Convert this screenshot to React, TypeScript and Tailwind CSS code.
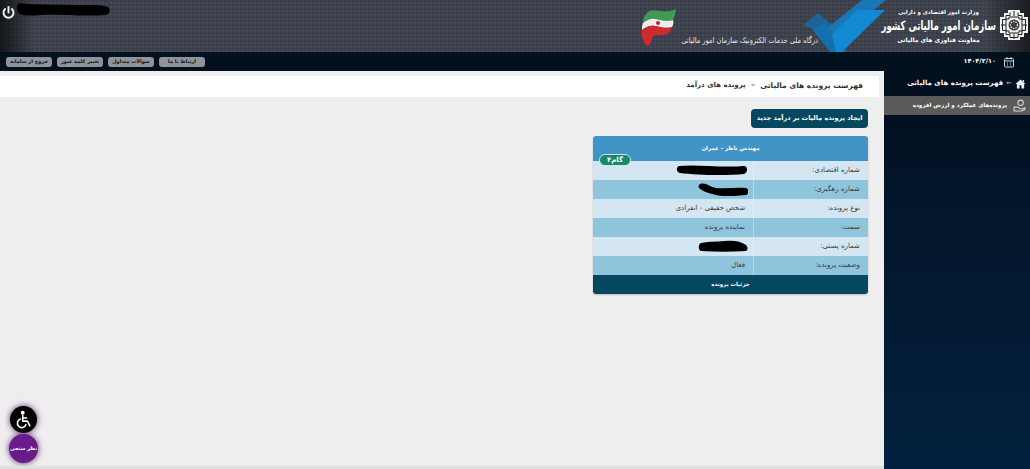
const rows = [
  { label: "شماره اقتصادی:", value: "", blob: "M3 2C20 0 45 4 68 2c4 0 4 7 0 8C50 12 20 11 4 9C0 8 0 3 3 2z", w: 72, h: 12 },
  { label: "شماره رهگیری:", value: "", blob: "M2 1c6-2 10 3 16 4c10 1 20-1 30 0c3 1 3 6 0 7c-10 1-20 2-30 0C10 10 4 8 1 5C0 3 1 2 2 1z", w: 50, h: 13 },
  { label: "نوع پرونده:", value: "شخص حقیقی - انفرادی", blob: "", w: 0, h: 0 },
  { label: "سمت:", value: "نماینده پرونده", blob: "", w: 0, h: 0 },
  { label: "شماره پستی:", value: "", blob: "M3 3c10-2 14-1 24-2c8-1 16 0 21 4c2 2 2 5 0 6c-15 1-30 1-45 0C0 10 0 4 3 3z", w: 50, h: 12 },
  { label: "وضعیت پرونده:", value: "فعال", blob: "", w: 0, h: 0 },
]

const navLinks = ["ارتباط با ما", "سوالات متداول", "تغییر کلمه عبور", "خروج از سامانه"]

const Logo = () => (
  <svg width="28" height="30" viewBox="0 0 28 30" className="shrink-0">
    <path d="M8 0h12v3h4v4h4v16h-4v4h-4v3H8v-3H4v-4H0V7h4V3h4z" fill="#f0f0f0" />
    <path d="M10 2.500v3H6v4H2.500v11H6v4h4v3h8v-3h4v-4h3.500v-11H22v-4h-4v-3M14 1v5M14 24v5M1 15h5M22 15h5" fill="none" stroke="#222" strokeWidth="1" />
    <path d="M9 7h10v2h3v12h-3v2H9v-2H6V9h3z" fill="none" stroke="#222" strokeWidth="1" />
    <circle cx="14" cy="15" r="5.500" fill="#3a3a3a" />
    <circle cx="14" cy="15" r="3.500" fill="none" stroke="#ddd" strokeWidth="1.300" strokeDasharray="1.500 1" />
  </svg>
)

const Flag = () => (
  <svg width="36" height="38" viewBox="0 0 36 38" className="shrink-0">
    <path d="M5 5C9 0 13 1 20 2C26 3 31 2 35 0C35 4 33 8 32 11C26 13 20 11 14 10C10 9 6 11 2 14C2 11 3 8 5 5z" fill="#3f9a55" />
    <path d="M2 14C6 11 10 9 14 10C20 11 26 13 32 11C33 14 32 16 31 18C25 20 20 18 14 17C9 16 5 18 1 21C1 19 1 16 2 14z" fill="#ececec" />
    <path d="M1 21C5 18 9 16 14 17C20 18 25 20 31 18C30 22 28 24 26 25C20 27 15 25 12 27C11 31 10 35 7 37C4 36 3 34 3 31C0 29 0 24 1 21z" fill="#cf2a2e" />
    <circle cx="17" cy="14" r="2" fill="#b3262c" />
  </svg>
)

const Check = () => (
  <svg width="90" height="52" viewBox="0 0 90 52" className="absolute left-[800px] top-0">
    <path d="M3 25L18 13L35 27L28 34z" fill="#1c6498" />
    <path d="M27 28L62 0H86L44 34L36 36z" fill="#1a77b5" />
    <path d="M12 29L25 23L47 52H30z" fill="#1370ac" />
    <path d="M32 34L57 10H85L42 52H36z" fill="#1289d3" />
  </svg>
)

const NavButton = ({ children }: { children: string }) => (
  <span className="flex h-[10px] w-[46px] items-center justify-center rounded-[3px] bg-[#8e939c] text-[5px] font-bold whitespace-nowrap text-[#111]">{children}</span>
)

export default function App() {
  return (
    <div className="relative flex h-[469px] w-[1030px] flex-col overflow-hidden bg-[#eeeeee] font-['DejaVu_Sans',sans-serif]" dir="rtl">
      <header className="relative flex h-[52px] shrink-0 items-center justify-between bg-[#3d424e] bg-[linear-gradient(90deg,#14161a_0,transparent_34px),linear-gradient(270deg,#1a1c20_0,transparent_45px),repeating-linear-gradient(0deg,#ffffff08_0,#ffffff08_2px,transparent_2px,transparent_4px),repeating-linear-gradient(90deg,#00000018_0,#00000018_2px,transparent_2px,transparent_4px)]">
        <Check />
        <div className="relative flex items-center">
          <div className="mr-[2px] mt-[-3px]"><Logo /></div>
          <div className="mr-[8px] flex w-[107px] flex-col items-center text-white">
            <span className="text-[5.5px] leading-[10px] font-bold whitespace-nowrap">وزارت امور اقتصادی و دارایی</span>
            <span className="scale-x-[0.66] text-[13px] leading-[17px] font-bold whitespace-nowrap">سازمان امور مالیاتی کشور</span>
            <span className="text-[6px] leading-[12px] font-bold whitespace-nowrap">معاونت فناوری های مالیاتی</span>
          </div>
          <div className="mr-[67px] mt-[29px] w-[137px] origin-right scale-x-[0.83] text-[8px] whitespace-nowrap text-[#e8e8e8]">درگاه ملی خدمات الکترونیک سازمان امور مالیاتی</div>
          <div className="mr-[4px] mt-[4px]"><Flag /></div>
        </div>
        <div className="mb-[30px] ml-[1px] flex items-start">
          <svg width="94" height="15" viewBox="0 0 96 15">
            <path d="M3 1c20 2 40 1 60 2c10 0 25-1 31 2c3 3 2 7-2 8c-20 2-50-1-65 0C15 14 8 14 4 12C0 9 0 3 3 1z" fill="#000" />
          </svg>
          <svg width="15" height="15" viewBox="0 0 24 24" fill="none" stroke="#eee" strokeWidth="3.200" strokeLinecap="round" className="mt-[3px]">
            <path d="M12 3v9" />
            <path d="M6.500 6.500a8 8 0 1 0 11 0" />
          </svg>
        </div>
      </header>

      <nav className="flex h-[19px] shrink-0 items-center justify-between bg-[#03111f] pl-[6px] pr-[15px]">
        <div className="flex items-center gap-[7px] text-white">
          <svg width="12" height="12" viewBox="0 0 24 24" fill="none" stroke="#c9ced6" strokeWidth="2">
            <rect x="3" y="5" width="18" height="17" rx="2" />
            <path d="M3 10h18M8 2v5M16 2v5M8 14h2M14 14h2M8 18h2M14 18h2" />
          </svg>
          <span className="text-[6.5px] font-bold">۱۴۰۴/۲/۱۰</span>
        </div>
        <div className="flex items-center gap-[5px]">
          {navLinks.map((link) => (
            <NavButton key={link}>{link}</NavButton>
          ))}
        </div>
      </nav>

      <div className="flex min-h-0 flex-1">
        <aside className="w-[146px] shrink-0 bg-[linear-gradient(180deg,#020f1e,#03213f)] text-white">
          <div className="flex h-[25px] items-center gap-[3px] pr-[4px] text-[7px] font-bold">
            <svg width="11" height="10" viewBox="0 0 24 22" fill="#e6edf3">
              <path d="M12 1L1 11h3v10h6v-7h4v7h6V11h3zM17 2h3v5l-3-2z" />
            </svg>
            <span className="text-[#8ba6bf]">←</span>
            <span className="whitespace-nowrap tracking-[0.15px]">فهرست پرونده های مالیاتی</span>
          </div>
          <div className="flex h-[19px] items-center gap-[6px] bg-[#5a5a5a] pr-[4px] text-[5.6px] font-bold">
            <svg width="13" height="13" viewBox="0 0 24 24" fill="none" stroke="#cfd4da" strokeWidth="2">
              <circle cx="14" cy="7" r="5" />
              <path d="M2 15h7l4 3h6l3-2v3l-6 3H2z" />
            </svg>
            <span className="whitespace-nowrap">پرونده‌های عملکرد و ارزش افزوده</span>
          </div>
        </aside>

        <main className="flex min-w-0 flex-1 flex-col pr-[5px]">
          <div className="mt-[5px] flex h-[21px] items-center bg-white pb-[2px] pr-[16px] text-[7px] font-bold text-[#333]">
            <span className="text-[7.5px]">فهرست پرونده های مالیاتی</span>
            <span className="mx-[5px] text-[#999]">»</span>
            <span>پرونده های درآمد</span>
          </div>

          <div className="mr-[11px] mt-[12px] w-[275px]">
            <div className="flex justify-start">
              <button className="h-[19px] w-[117px] rounded-[4px] bg-[#05475f] text-[6.5px] font-bold whitespace-nowrap text-white">ایجاد پرونده مالیات بر درآمد جدید</button>
            </div>

            <div className="relative mt-[8px] overflow-hidden rounded-[3px] shadow-[0_1px_2px_#0003]">
              <div className="flex h-[25px] items-center justify-center bg-[#4394c6] text-[5.5px] font-bold text-white">مهندس ناظر - عمران</div>
              <span className="absolute left-[6px] top-[18px] flex h-[12px] w-[32px] items-center justify-center rounded-full border border-[#cfe3ee] bg-[#14896b] text-[7px] font-bold text-white">گام۴</span>
              {rows.map((row, index) => (
                <div key={row.label} className={index % 2 ? "flex h-[19px] items-center bg-[#8fc5dc] text-[7px] text-[#3a3a3a]" : "flex h-[19px] items-center bg-[#d3e6f1] text-[7px] text-[#3a3a3a]"}>
                  <div className="flex h-full w-[115px] items-center border-l border-l-[#ffffff55] pb-px pr-[8px]">{row.label}</div>
                  <div className="flex flex-1 items-center pb-px pr-[8px]">
                    {row.blob ? (
                      <svg width={row.w} height={row.h} viewBox={`0 0 ${row.w} ${row.h}`} className="-mr-[3px]">
                        <path d={row.blob} fill="#000" />
                      </svg>
                    ) : row.value}
                  </div>
                </div>
              ))}
              <div className="flex h-[19px] items-center justify-center bg-[#05475f] text-[5.5px] font-bold text-white">جزئیات پرونده</div>
            </div>
          </div>
        </main>
      </div>

      <div className="absolute left-[10px] top-[406px] flex h-[27px] w-[27px] items-center justify-center rounded-full bg-black shadow-[0_0_6px_#5b2a6e]">
        <svg width="19" height="19" viewBox="0 0 24 24" fill="none" stroke="#fff" strokeWidth="2" strokeLinecap="round" strokeLinejoin="round">
          <circle cx="11" cy="3.500" r="1.500" fill="#fff" />
          <path d="M11 7v7h6l3 6" />
          <path d="M11 10h5" />
          <path d="M8 11.500a5.500 5.500 0 1 0 7 7" />
        </svg>
      </div>
      <div className="absolute left-[9px] top-[434px] flex h-[29px] w-[29px] items-center justify-center rounded-full bg-[#6a1b8a] text-[5px] font-bold whitespace-nowrap text-white shadow-[0_0_6px_#5b2a6e]">نظر سنجی</div>
      <div className="absolute bottom-0 left-0 h-[3px] w-[884px] bg-[#e0e0e0]" />
    </div>
  )
}
